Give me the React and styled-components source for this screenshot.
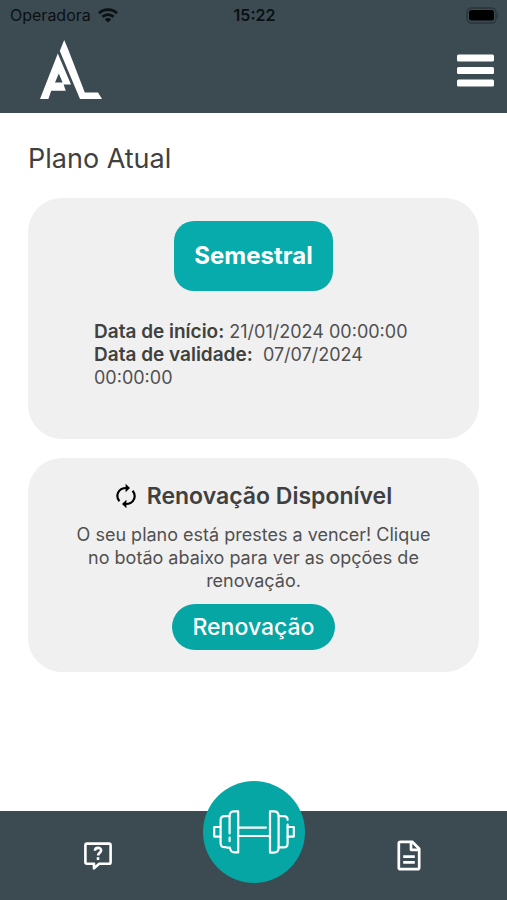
import React from "react";
import styled, { createGlobalStyle, ThemeProvider } from "styled-components";

const theme = {
  colors: {
    slate: "#3c4b52",
    teal: "#07abab",
    tealDark: "#06a6a4",
    card: "#f0f0f0",
    text: "#404040",
    muted: "#505050",
    white: "#ffffff",
    status: "#0b1013"
  }
};

const GlobalStyle = createGlobalStyle`
  * {
    box-sizing: border-box;
  }

  body {
    margin: 0;
    background: #ffffff;
    font-family: Inter, "Liberation Sans", sans-serif;
  }

  h1, h2, p, dl, dd {
    margin: 0;
  }
`;

const Page = styled.div`
  display: flex;
  flex-direction: column;
  min-height: 100vh;
`;

const Header = styled.header`
  background: ${props => props.theme.colors.slate};
`;

const StatusBar = styled.div`
  display: grid;
  grid-template-columns: 1fr auto 1fr;
  align-items: center;
  height: 30px;
  padding: 0 8px 0 10px;
  color: ${props => props.theme.colors.status};
  font-size: 16px;
`;

const Carrier = styled.span`
  display: flex;
  align-items: center;
  gap: 7px;
`;

const Clock = styled.time`
  font-weight: 600;
`;

const Battery = styled.svg`
  justify-self: end;
`;

const TopBar = styled.div`
  display: flex;
  align-items: center;
  justify-content: space-between;
  height: 83px;
  padding: 0 13px 3px 40px;
`;

const HomeLink = styled.a`
  display: flex;
`;

const IconButton = styled.button`
  display: flex;
  padding: 0;
  border: 0;
  background: none;
  color: ${props => props.theme.colors.white};
  cursor: pointer;
`;

const Main = styled.main`
  display: flex;
  flex: 1;
  flex-direction: column;
  gap: 19px;
  padding: 28px;
`;

const Title = styled.h1`
  margin-bottom: 3px;
  color: ${props => props.theme.colors.text};
  font-size: 27px;
  font-weight: 400;
  line-height: 35px;
`;

const Card = styled.section`
  display: flex;
  flex-direction: column;
  align-items: center;
  padding: ${props => props.$padding};
  border-radius: 34px;
  background: ${props => props.theme.colors.card};
`;

const PlanBadge = styled.div`
  padding: 20px;
  border-radius: 20px;
  background: ${props => props.theme.colors.teal};
  color: ${props => props.theme.colors.white};
  font-size: 24px;
  font-weight: 700;
  line-height: 30px;
`;

const Dates = styled.dl`
  align-self: stretch;
  margin-top: 29px;
  padding: 0 56px 0 66px;
  color: ${props => props.theme.colors.muted};
  font-size: 18px;
  line-height: 23px;

  dt,
  dd {
    display: inline;
  }

  dt {
    color: ${props => props.theme.colors.text};
    font-size: 19px;
    font-weight: 600;
  }
`;

const CardHeading = styled.h2`
  display: flex;
  align-items: center;
  gap: 10px;
  color: ${props => props.theme.colors.text};
  font-size: 23px;
  font-weight: 600;
  line-height: 30px;
`;

const Message = styled.p`
  margin: 12px 0;
  color: ${props => props.theme.colors.muted};
  font-size: 18px;
  line-height: 23px;
  text-align: center;
`;

const RenewButton = styled.button`
  padding: 8px 21px;
  border: 0;
  border-radius: 24px;
  background: ${props => props.theme.colors.tealDark};
  color: ${props => props.theme.colors.white};
  font-family: inherit;
  font-size: 23px;
  font-weight: 500;
  line-height: 30px;
  cursor: pointer;
`;

const BottomNav = styled.nav`
  display: grid;
  grid-template-columns: 1fr auto 1fr;
  column-gap: 6px;
  justify-items: center;
  align-items: center;
  height: 89px;
  background: ${props => props.theme.colors.slate};
`;

const NavLink = styled.a`
  display: flex;
  color: ${props => props.theme.colors.white};
`;

const WorkoutButton = styled(IconButton)`
  align-items: center;
  justify-content: center;
  width: 102px;
  height: 102px;
  margin-top: -48px;
  border-radius: 50%;
  background: ${props => props.theme.colors.tealDark};
`;

const WifiIcon = () => (
  <svg width="20" height="15" viewBox="0 0 20 15" fill="none" stroke="currentColor" strokeWidth="2.8" aria-hidden="true">
    <path d="M1 5.2C6 .4 14 .4 19 5.2" />
    <path d="M4.4 8.8c3.2-3 8-3 11.2 0" />
    <path d="M10 14.6 6.8 11.3c1.8-1.6 4.6-1.6 6.4 0z" fill="currentColor" stroke="none" />
  </svg>
);

const BatteryIcon = () => (
  <Battery width="33" height="17" viewBox="0 0 33 17" role="img" aria-label="Bateria">
    <rect x="1" y="1" width="29" height="15" rx="4.5" fill="none" stroke="#2a353a" strokeWidth="1.4" />
    <rect x="3" y="3" width="25" height="10.6" rx="2.5" fill="#000000" />
    <path d="M31.2 6v5c1.6-.6 1.6-4.4 0-5z" fill="#2a353a" />
  </Battery>
);

const Logo = () => (
  <svg width="62" height="60" viewBox="0 0 62 60" fill="#ffffff" aria-hidden="true">
    <path
      fillRule="evenodd"
      d="M0 59 17.8 13.6 31 44.4h-7.4l2.2 6.4H11.2L8.4 59zM18.8 33.6 15 42.6h7.6z"
    />
    <path d="M24.2 0 19.8 11 40 59H62l-4-6.6H44.8L28 9z" />
  </svg>
);

const MenuIcon = () => (
  <svg width="37" height="33" viewBox="0 0 37 33" fill="currentColor" aria-hidden="true">
    <rect width="37" height="7" rx="1.5" y="0.5" />
    <rect width="37" height="7" rx="1.5" y="13" />
    <rect width="37" height="7" rx="1.5" y="25.5" />
  </svg>
);

const RenewIcon = () => (
  <svg width="22" height="26" viewBox="0 0 22 26" fill="none" stroke="#000000" strokeWidth="2.2" aria-hidden="true">
    <path d="M4.4 18.2C.2 13 2.8 5 11.4 5" />
    <path d="M17.6 7.8C21.8 13 19.2 21 10.6 21" />
    <path d="M10.6.8v8.4L15 5zM11.4 25.2v-8.4L7 21z" fill="#000000" stroke="none" />
  </svg>
);

const HelpIcon = () => (
  <svg width="28" height="28" viewBox="0 0 28 28" fill="none" stroke="currentColor" strokeWidth="2.6" strokeLinejoin="round" aria-hidden="true">
    <path d="M3 1.6h22q1.6 0 1.6 1.6v17q0 1.6-1.6 1.6H15.2L10 26.4v-4.6H3q-1.6 0-1.6-1.6v-17Q1.4 1.6 3 1.6z" />
    <path d="M10.9 8.8c.2-3.8 6.2-3.8 6.2-.4 0 2.2-3 2.4-3 5" />
    <path d="M14 15.2V18" />
  </svg>
);

const DocumentIcon = () => (
  <svg width="24" height="31" viewBox="0 0 24 31" fill="none" stroke="currentColor" strokeWidth="2.7" strokeLinejoin="round" aria-hidden="true">
    <path d="M3.6 1.8h11.6l7 7v18.6q0 1.8-1.8 1.8H3.6q-1.8 0-1.8-1.8V3.6q0-1.8 1.8-1.8z" />
    <path d="M14 2v7.8h8" />
    <path d="M6.2 16.6h11.6M6.2 22.4h11.6" />
  </svg>
);

const DumbbellIcon = () => (
  <svg width="82" height="44" viewBox="0 0 82 44" fill="none" stroke="currentColor" strokeWidth="2.2" strokeLinecap="round" strokeLinejoin="round" aria-hidden="true">
    <path d="M7.4 17H1.2v9.6h6.2" />
    <path d="M16.6 6.2h-5q-4 0-4 4v23q0 4 4 4h1" />
    <path d="M16.6 23.4V6q0-4.6 4.6-4.6h4v41h-4q-3.4 0-4.4-4.8h-3M16.6 27.6v3.6" />
    <path d="M25.4 17.6H53M25.4 26H57" />
    <path d="M57 1.4h4q4.6 0 4.6 4.6v32q0 4.6-4.6 4.6h-4z" />
    <path d="M65.6 6.2h5q4 0 4 3.6M74.6 14.6v18.8q0 4-4 4h-5" />
    <path d="M74.6 17h6.2v9.6h-6.2" />
  </svg>
);

/**
 * Current plan screen with the renewal call to action
 */
const App = () => (
  <ThemeProvider theme={theme}>
    <GlobalStyle />
    <Page>
      <Header>
        <StatusBar>
          <Carrier>
            Operadora
            <WifiIcon />
          </Carrier>
          <Clock>15:22</Clock>
          <BatteryIcon />
        </StatusBar>
        <TopBar>
          <HomeLink href="#inicio" aria-label="Início">
            <Logo />
          </HomeLink>
          <IconButton type="button" aria-label="Menu">
            <MenuIcon />
          </IconButton>
        </TopBar>
      </Header>

      <Main>
        <Title>Plano Atual</Title>

        <Card $padding="23px 0 50px">
          <PlanBadge>Semestral</PlanBadge>
          <Dates>
            <div>
              <dt>Data de início:</dt> <dd>21/01/2024 00:00:00</dd>
            </div>
            <div>
              <dt>Data de validade:</dt>&nbsp; <dd>07/07/2024 00:00:00</dd>
            </div>
          </Dates>
        </Card>

        <Card $padding="23px 36px 22px">
          <CardHeading>
            <RenewIcon />
            Renovação Disponível
          </CardHeading>
          <Message>
            O seu plano está prestes a vencer! Clique no botão abaixo para ver as opções de renovação.
          </Message>
          <RenewButton type="button">Renovação</RenewButton>
        </Card>
      </Main>

      <BottomNav>
        <NavLink href="#ajuda" aria-label="Ajuda">
          <HelpIcon />
        </NavLink>
        <WorkoutButton type="button" aria-label="Treino">
          <DumbbellIcon />
        </WorkoutButton>
        <NavLink href="#documentos" aria-label="Documentos">
          <DocumentIcon />
        </NavLink>
      </BottomNav>
    </Page>
  </ThemeProvider>
);

export default App;
